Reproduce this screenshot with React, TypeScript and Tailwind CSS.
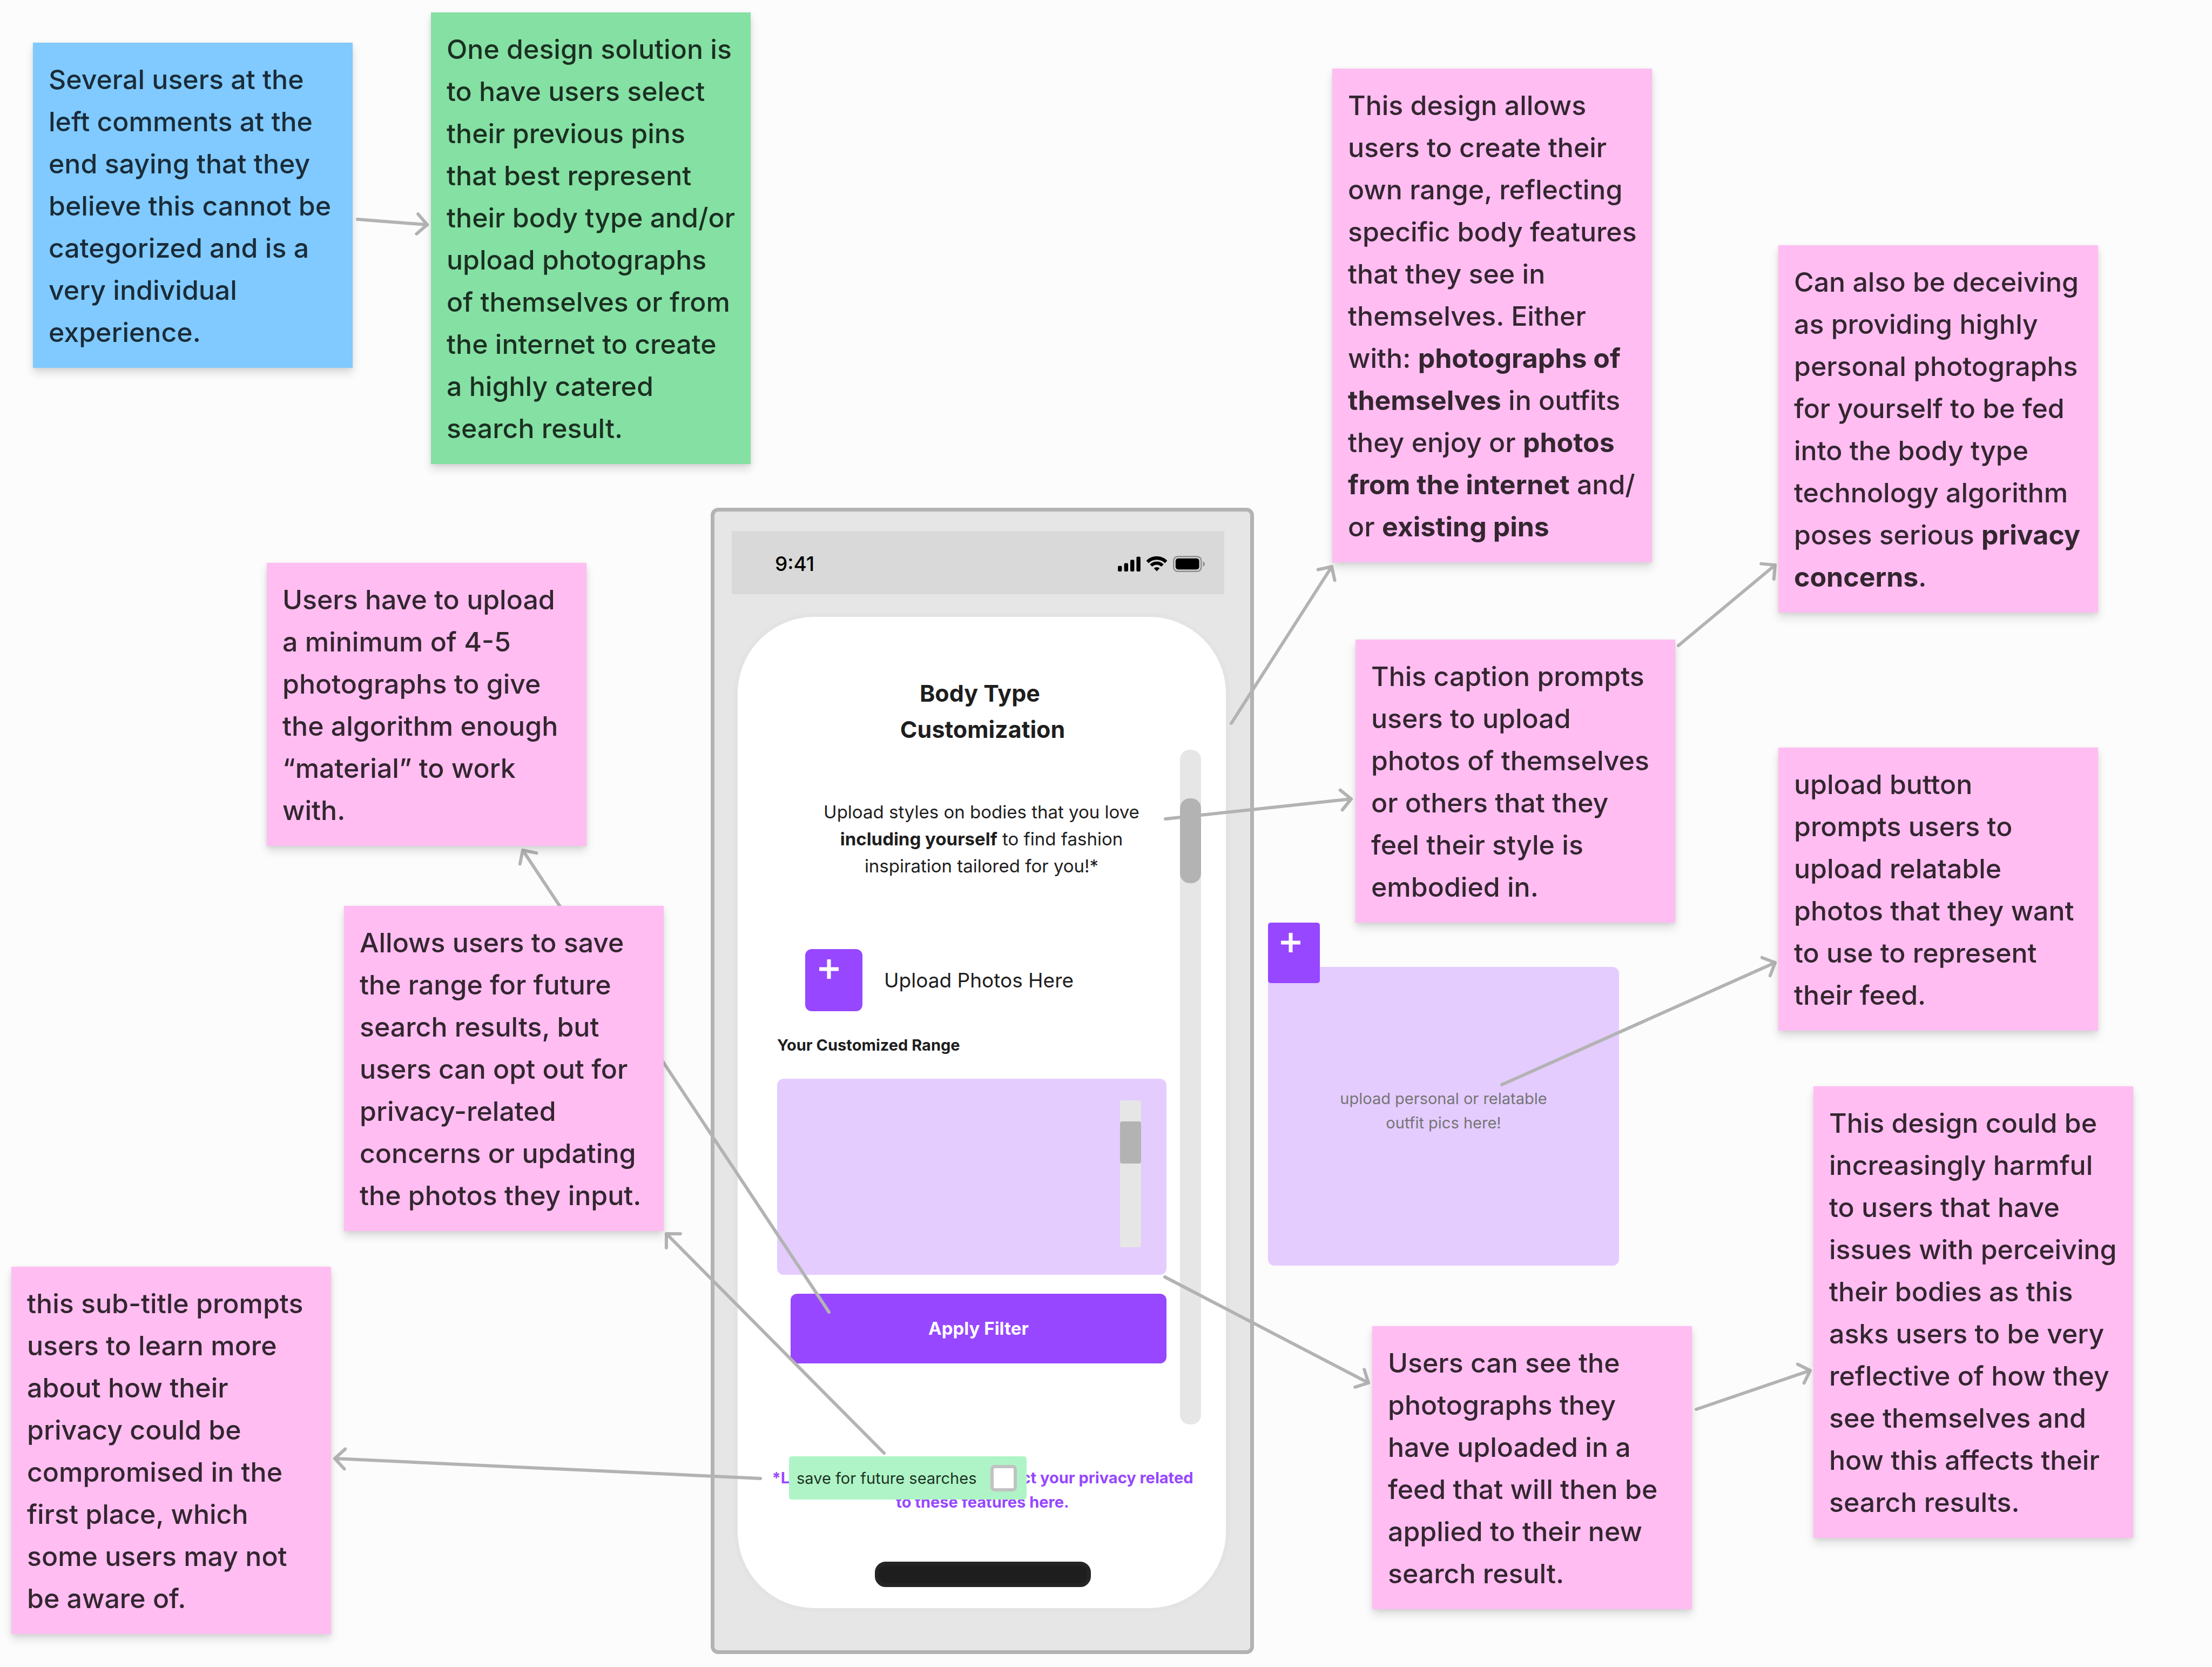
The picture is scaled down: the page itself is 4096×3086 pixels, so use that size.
import type { ReactNode } from "react";

type Point = { x: number; y: number };

const ARROWS: { from: Point; to: Point }[] = [
  { from: { x: 662, y: 406 }, to: { x: 791, y: 416 } },
  { from: { x: 1535, y: 2429 }, to: { x: 968, y: 1574 } },
  { from: { x: 1637, y: 2690 }, to: { x: 1234, y: 2284 } },
  { from: { x: 1408, y: 2737 }, to: { x: 620, y: 2700 } },
  { from: { x: 2280, y: 1339 }, to: { x: 2466, y: 1049 } },
  { from: { x: 2158, y: 1516 }, to: { x: 2502, y: 1479 } },
  { from: { x: 3108, y: 1195 }, to: { x: 3287, y: 1046 } },
  { from: { x: 2781, y: 2008 }, to: { x: 3287, y: 1782 } },
  { from: { x: 2157, y: 2364 }, to: { x: 2534, y: 2560 } },
  { from: { x: 3141, y: 2609 }, to: { x: 3352, y: 2537 } },
];

const HEAD = 26;

function arrowPath(from: Point, to: Point) {
  const back = Math.atan2(from.y - to.y, from.x - to.x);
  const wing = (turn: number) =>
    `${to.x + HEAD * Math.cos(back + turn)} ${to.y + HEAD * Math.sin(back + turn)}`;
  return `M${from.x} ${from.y}L${to.x} ${to.y}M${wing(Math.PI / 4)}L${to.x} ${to.y}L${wing(-Math.PI / 4)}`;
}

function Connectors() {
  return (
    <svg
      className="pointer-events-none absolute inset-0 z-10 h-full w-full overflow-visible"
      fill="none"
      stroke="#b3b3b3"
      strokeWidth="6"
      strokeLinecap="round"
      strokeLinejoin="round"
      aria-hidden="true"
    >
      {ARROWS.map(({ from, to }, i) => (
        <path key={i} d={arrowPath(from, to)} />
      ))}
    </svg>
  );
}

function Note({ place, color, children }: { place: string; color: string; children: ReactNode }) {
  return (
    <article
      className={`absolute z-20 w-[592px] px-[29px] pt-[29px] pb-[27px] text-[50px] leading-[78px] font-medium whitespace-nowrap shadow-[0_10px_16px_rgba(0,0,0,0.12),0_2px_8px_rgba(0,0,0,0.08)] ${place} ${color}`}
    >
      {children}
    </article>
  );
}

const PINK = "bg-[#ffbdf2] text-[#33262f]";

function PlusIcon() {
  return (
    <svg width="36" height="36" viewBox="0 0 36 36" aria-hidden="true">
      <path d="M18 0V36M0 18H36" stroke="#fff" strokeWidth="7" />
    </svg>
  );
}

function StatusBar() {
  return (
    <div className="mr-12 ml-8 flex h-[117px] items-center justify-between bg-[#d9d9d9] pt-1 pr-9 pl-20">
      <span className="text-[37px] font-medium text-black">9:41</span>
      <div className="flex items-center gap-[11px]">
        <svg width="42" height="28" viewBox="0 0 42 28" aria-hidden="true">
          <rect x="0" y="17.5" width="7.4" height="10.5" rx="2.2" />
          <rect x="11.6" y="12.4" width="7.4" height="15.6" rx="2.2" />
          <rect x="23" y="6.2" width="7.4" height="21.8" rx="2.2" />
          <rect x="34.4" y="0.5" width="7.4" height="27.5" rx="2.2" />
        </svg>
        <svg width="38" height="30" viewBox="0 0 38 30" fill="none" stroke="#000" aria-hidden="true">
          <path d="M1.7 11.2A24.5 24.5 0 0 1 36.3 11.2" strokeWidth="6.4" />
          <path d="M8.4 17.9A15 15 0 0 1 29.6 17.9" strokeWidth="6" />
          <path d="M19 28.5L13.6 23.1A7.7 7.7 0 0 1 24.4 23.1Z" fill="#000" stroke="none" />
        </svg>
        <svg width="59" height="30" viewBox="0 0 59 30" aria-hidden="true">
          <rect x="1.2" y="1.2" width="51" height="27.6" rx="7.5" fill="none" stroke="#8d8d8d" strokeWidth="2.4" />
          <rect x="4.8" y="4.8" width="43.8" height="20.4" rx="4.6" />
          <path d="M55.5 10.2C57.6 11 59 12.800 59 15C59 17.200 57.6 19 55.5 19.800Z" fill="#8d8d8d" />
        </svg>
      </div>
    </div>
  );
}

function Phone() {
  return (
    <section className="absolute top-[940px] left-[1316px] w-[1006px] rounded-[14px] border-[7px] border-[#b3b3b3] bg-[#e6e6e6] pt-9 pb-[71px]">
      <StatusBar />
      <div className="mt-[35px] mr-[38px] ml-9 rounded-[149px] border-[7px] border-[#e3e3e3] bg-white pt-[108px] pb-[39px] pl-[3px] text-[#1e1e1e]">
        <h1 className="text-center text-[43px] leading-[67px] font-bold">
          Body Type&nbsp;
          <br />
          Customization
        </h1>

        <div className="mt-1 mr-[46px] ml-[70px] flex gap-[25px]">
          <div className="flex-1">
            <p className="mt-[90px] ml-9 text-center text-[33px] leading-[50px] whitespace-nowrap">
              Upload styles on bodies that you love
              <br />
              <strong>including yourself</strong> to find fashion
              <br />
              inspiration tailored for you!*
            </p>

            <div className="mt-[129px] ml-[52px] flex items-center gap-10">
              <button
                type="button"
                aria-label="Upload photos"
                className="flex h-[115px] w-[106px] rounded-xl bg-[#9747ff] pt-[19px] pl-[26px]"
              >
                <PlusIcon />
              </button>
              <span className="text-[37px]">Upload Photos Here</span>
            </div>

            <h2 className="mt-10 text-[29px] leading-[45px] font-bold">Your Customized Range</h2>

            <div className="mt-10 flex h-[363px] justify-end rounded-xl bg-[#e4ccff] pt-10 pr-[47px]">
              <div className="h-[272px] w-[39px] rounded-[4px] bg-[#e6e6e6] pt-[39px]">
                <div className="h-[78px] rounded-[4px] bg-[#b3b3b3]" />
              </div>
            </div>

            <button
              type="button"
              className="mt-[35px] ml-[25px] block h-[129px] w-[696px] rounded-xl bg-[#9747ff] text-[33px] font-bold text-white"
            >
              Apply Filter
            </button>
          </div>

          <div className="h-[1249px] w-[39px] rounded-[18px] bg-[#e6e6e6] pt-[90px]">
            <div className="relative z-20 h-[157px] rounded-[18px] bg-[#b3b3b3]" />
          </div>
        </div>

        <div className="relative mt-[76px] text-center text-[29px] leading-[45px] font-bold whitespace-nowrap">
          <a href="#privacy" className="text-[#9747ff]">
            *Learn more about how we protect your privacy related
            <br />
            to these features here.
          </a>
          <label className="absolute -top-[17px] left-[92px] flex h-20 w-[440px] items-center justify-between rounded-[5px] bg-[#aff4c6] pr-[18px] pl-[14px] font-normal text-[#1e3325]">
            save for future searches
            <input
              type="checkbox"
              className="size-[49px] appearance-none rounded-[8px] border-[6px] border-[#c2c2c2] bg-white"
            />
          </label>
        </div>

        <div className="mx-auto mt-[88px] h-[47px] w-[400px] rounded-[20px] border-[7px] border-[#252525] bg-[#1e1e1e]" />
      </div>
    </section>
  );
}

function UploadPanel() {
  return (
    <section className="absolute top-[1708px] left-[2348px] w-[650px]">
      <button
        type="button"
        aria-label="Add outfit picture"
        className="absolute top-0 left-0 flex h-28 w-24 rounded-[5px] bg-[#9747ff] pt-[19px] pl-6"
      >
        <PlusIcon />
      </button>
      <div className="mt-[82px] h-[553px] rounded-xl bg-[#e4ccff] pt-[221px]">
        <p className="text-center text-[29px] leading-[45px] text-[#757575]">
          upload personal or relatable
          <br />
          outfit pics here!
        </p>
      </div>
    </section>
  );
}

export default function App() {
  return (
    <main className="relative min-h-screen w-full overflow-hidden bg-[#fcfcfc] font-['Inter',sans-serif]">
      <Phone />
      <UploadPanel />
      <Connectors />

      <Note place="left-[61px] top-[79px]" color="bg-[#80caff] text-[#1a2b38]">
        Several users at the
        <br />
        left comments at the
        <br />
        end saying that they
        <br />
        believe this cannot be
        <br />
        categorized and is a
        <br />
        very individual
        <br />
        experience.
      </Note>
      <Note place="left-[798px] top-[23px]" color="bg-[#85e0a3] text-[#1b2f22]">
        One design solution is
        <br />
        to have users select
        <br />
        their previous pins
        <br />
        that best represent
        <br />
        their body type and/or
        <br />
        upload photographs
        <br />
        of themselves or from
        <br />
        the internet to create
        <br />
        a highly catered
        <br />
        search result.
      </Note>
      <Note place="left-[2467px] top-[127px]" color={PINK}>
        This design allows
        <br />
        users to create their
        <br />
        own range, reflecting
        <br />
        specific body features
        <br />
        that they see in
        <br />
        themselves. Either
        <br />
        with: <strong>photographs of</strong>
        <br />
        <strong>themselves</strong> in outfits
        <br />
        they enjoy or <strong>photos</strong>
        <br />
        <strong>from the internet</strong> and/
        <br />
        or <strong>existing pins</strong>
      </Note>
      <Note place="left-[3293px] top-[454px]" color={PINK}>
        Can also be deceiving
        <br />
        as providing highly
        <br />
        personal photographs
        <br />
        for yourself to be fed
        <br />
        into the body type
        <br />
        technology algorithm
        <br />
        poses serious <strong>privacy</strong>
        <br />
        <strong>concerns</strong>.
      </Note>
      <Note place="left-[494px] top-[1042px]" color={PINK}>
        Users have to upload
        <br />
        a minimum of 4-5
        <br />
        photographs to give
        <br />
        the algorithm enough
        <br />
        “material” to work
        <br />
        with.
      </Note>
      <Note place="left-[637px] top-[1677px]" color={PINK}>
        Allows users to save
        <br />
        the range for future
        <br />
        search results, but
        <br />
        users can opt out for
        <br />
        privacy-related
        <br />
        concerns or updating
        <br />
        the photos they input.
      </Note>
      <Note place="left-[21px] top-[2345px]" color={PINK}>
        this sub-title prompts
        <br />
        users to learn more
        <br />
        about how their
        <br />
        privacy could be
        <br />
        compromised in the
        <br />
        first place, which
        <br />
        some users may not
        <br />
        be aware of.
      </Note>
      <Note place="left-[2510px] top-[1184px]" color={PINK}>
        This caption prompts
        <br />
        users to upload
        <br />
        photos of themselves
        <br />
        or others that they
        <br />
        feel their style is
        <br />
        embodied in.
      </Note>
      <Note place="left-[3293px] top-[1384px]" color={PINK}>
        upload button
        <br />
        prompts users to
        <br />
        upload relatable
        <br />
        photos that they want
        <br />
        to use to represent
        <br />
        their feed.
      </Note>
      <Note place="left-[3358px] top-[2011px]" color={PINK}>
        This design could be
        <br />
        increasingly harmful
        <br />
        to users that have
        <br />
        issues with perceiving
        <br />
        their bodies as this
        <br />
        asks users to be very
        <br />
        reflective of how they
        <br />
        see themselves and
        <br />
        how this affects their
        <br />
        search results.
      </Note>
      <Note place="left-[2541px] top-[2455px]" color={PINK}>
        Users can see the
        <br />
        photographs they
        <br />
        have uploaded in a
        <br />
        feed that will then be
        <br />
        applied to their new
        <br />
        search result.
      </Note>
    </main>
  );
}
